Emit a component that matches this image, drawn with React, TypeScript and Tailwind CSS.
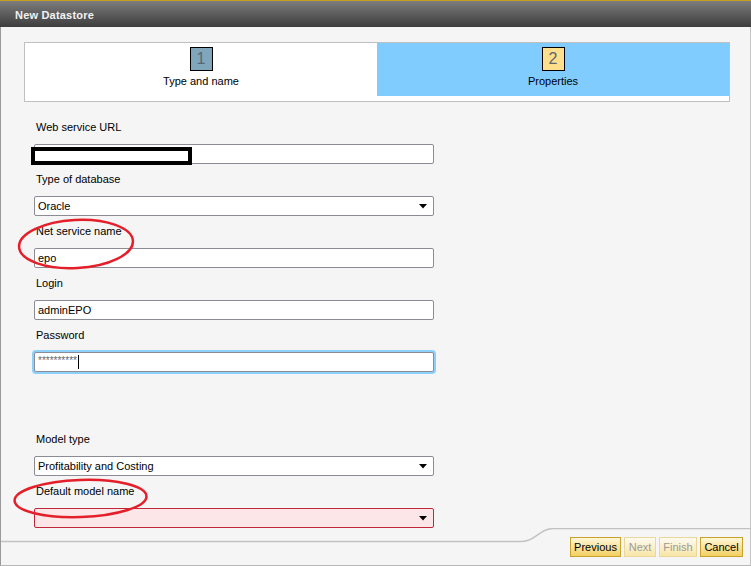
import React from "react";

const font = { fontFamily: '"Liberation Sans", Arial, sans-serif' };

function Label({ children }: { children: React.ReactNode }) {
  return (
    <div className="h-[32px] pt-[9px] pl-[2px] text-[11px] leading-[13px] text-black">
      {children}
    </div>
  );
}

function Arrow() {
  return (
    <svg className="absolute right-[6px] top-[7px]" width="8" height="5" viewBox="0 0 8 5">
      <path d="M0 0 L8 0 L4 4.5 Z" fill="#000" />
    </svg>
  );
}

function TextBox({ value, children }: { value?: string; children?: React.ReactNode }) {
  return (
    <div className="relative w-[400px] h-[20px] rounded-[2px] border border-[#8c8c96] bg-white pl-[3px] text-[11px] leading-[18px] text-black">
      {value}
      {children}
    </div>
  );
}

function SelectBox({ value, invalid }: { value?: string; invalid?: boolean }) {
  return (
    <div
      className={
        invalid
          ? "relative w-[400px] h-[20px] rounded-[2px] border border-[#c0283a] bg-[#fce6e8] pl-[3px] text-[11px] leading-[18px] text-black"
          : "relative w-[400px] h-[20px] rounded-[2px] border border-[#8c8c96] bg-white pl-[3px] text-[11px] leading-[18px] text-black"
      }
    >
      {value}
      <Arrow />
    </div>
  );
}

function Btn({ children, disabled, w }: { children: React.ReactNode; disabled?: boolean; w: string }) {
  return (
    <div
      className={
        (disabled
          ? "border-[#ead79a] bg-gradient-to-b from-[#fffaf0] to-[#f8e6a6] text-[#9a9a9a] "
          : "border-[#c9a12e] bg-gradient-to-b from-[#fff7d6] to-[#f3cf5e] text-black ") +
        "h-[20px] border flex items-center justify-center text-[11px] leading-[13px] " +
        w
      }
    >
      {children}
    </div>
  );
}

export default function App() {
  return (
    <div className="relative w-[751px] h-[566px] flex flex-col bg-[#f5f5f5] overflow-hidden" style={font}>
      <div className="h-px bg-[#c8a020]" />
      <div className="h-[26px] bg-gradient-to-b from-[#7d7d7d] to-[#3e3e3e] flex items-center pl-[15px] pt-[2px]">
        <span className="text-[11px] font-bold text-[#f2f2f2] tracking-[0.2px]">New Datastore</span>
      </div>
      <div className="flex-1 flex flex-col border-l border-r border-b border-l-[#9a9a9a] border-r-[#c4c4c4] border-b-[#b8b8b8]">
        <div className="flex-1 flex flex-col">
          <div className="pt-[15px] pl-[23px]">
            <div className="w-[706px] h-[60px] border border-[#c0c0c0] bg-white flex">
              <div className="w-1/2 h-[53px] bg-white flex flex-col items-center">
                <div className="mt-[4px] w-[23px] h-[24px] border border-black bg-[#7fa6bb] flex items-center justify-center text-[16px] text-[#5b6670]">
                  1
                </div>
                <div className="mt-[4px] text-[11px] leading-[13px] text-black">Type and name</div>
              </div>
              <div className="w-1/2 h-[53px] bg-[#80ccff] flex flex-col items-center">
                <div className="mt-[4px] w-[23px] h-[24px] border border-black bg-[#ffdf8c] flex items-center justify-center text-[16px] text-[#5b6670]">
                  2
                </div>
                <div className="mt-[4px] text-[11px] leading-[13px] text-black">Properties</div>
              </div>
            </div>
          </div>
          <div className="pl-[33px] mt-[10px] flex flex-col">
            <Label>Web service URL</Label>
            <TextBox>
              <div className="absolute left-[-4px] top-[2px] w-[161px] h-[18px] border-4 border-black bg-white" />
            </TextBox>
            <Label>Type of database</Label>
            <SelectBox value="Oracle" />
            <Label>Net service name</Label>
            <TextBox value="epo" />
            <Label>Login</Label>
            <TextBox value="adminEPO" />
            <Label>Password</Label>
            <div className="relative w-[400px] h-[20px] rounded-[2px] border border-[#8c8c96] bg-white pl-[3px] ring-2 ring-[#8dd0fb] flex items-start">
              <span className="text-[10px] leading-[14px] text-[#666] mt-[1px]">**********</span>
              <span className="ml-[1px] mt-[2px] w-px h-[14px] bg-black" />
            </div>
            <div className="h-[52px]" />
            <Label>Model type</Label>
            <SelectBox value="Profitability and Costing" />
            <Label>Default model name</Label>
            <SelectBox invalid />
          </div>
        </div>
        <div className="relative h-[37px] flex justify-end items-start pt-[9px] pr-[7px] gap-[3px]">
          <svg className="absolute left-0 top-0" width="751" height="16" viewBox="0 0 751 16">
            <path d="M0 13.5 L520 13.5 C535 13.5 538 0.5 552 0.5 L751 0.5" fill="none" stroke="#c2c2c2" strokeWidth="1.5" />
          </svg>
          <Btn w="w-[51px]">Previous</Btn>
          <Btn w="w-[32px]" disabled>Next</Btn>
          <Btn w="w-[38px]" disabled>Finish</Btn>
          <Btn w="w-[43px]">Cancel</Btn>
        </div>
      </div>
      <svg className="absolute left-0 top-0 pointer-events-none" width="751" height="566" viewBox="0 0 751 566">
        <ellipse cx="76" cy="244" rx="57" ry="24" fill="none" stroke="#e51f2a" strokeWidth="2.5" transform="rotate(-3 76 244)" />
        <ellipse cx="80.5" cy="498.5" rx="66" ry="18.5" fill="none" stroke="#e51f2a" strokeWidth="2.5" transform="rotate(-2 80.5 498.5)" />
      </svg>
    </div>
  );
}
